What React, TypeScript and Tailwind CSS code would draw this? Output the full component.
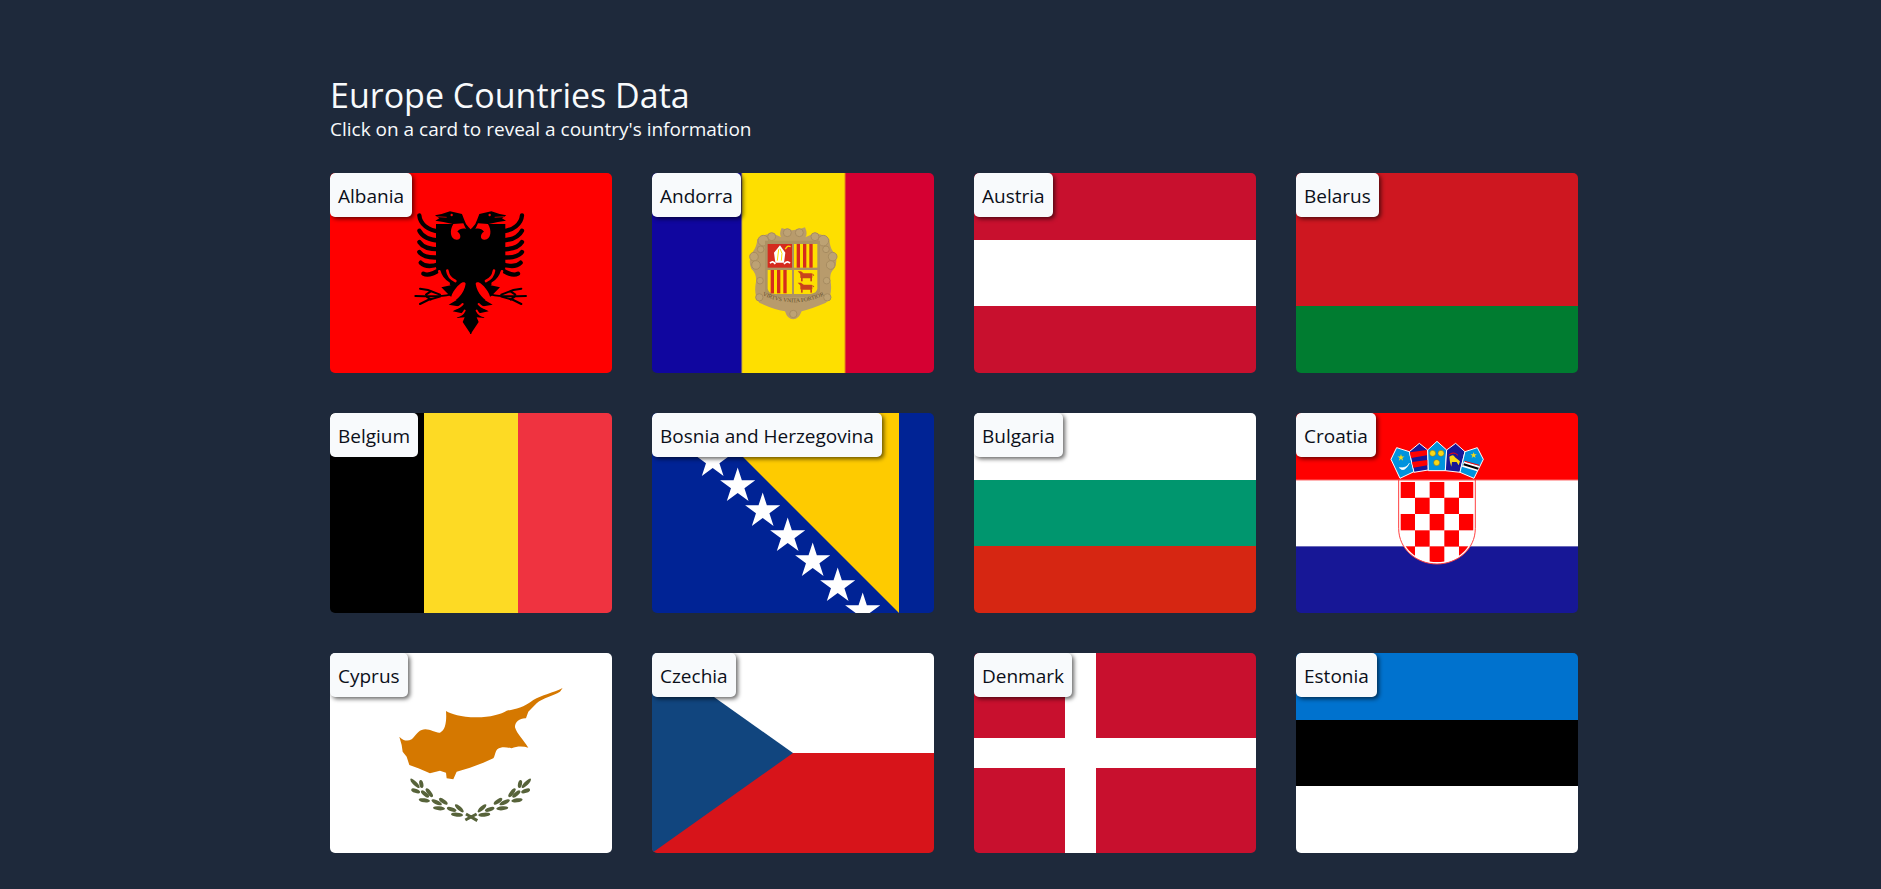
import React from "react";

const Stripes = ({ dir, bands }: { dir: "h" | "v"; bands: [string, number, number][] }) => (
  <>
    {bands.map(([c, a, b], i) =>
      dir === "h" ? (
        <rect key={i} x={0} y={a} width={282} height={b - a} fill={c} />
      ) : (
        <rect key={i} x={a} y={0} width={b - a} height={200} fill={c} />
      )
    )}
  </>
);

const EagleHalf = () => (
  <g>
    <path
      d="M214 402 L212 402 L188 366 L194 352 L170 354 L186 340 L158 334 L182 320 L146 314 L170 300 L150 288 L124 262 L152 256 L134 240 L122 222 L108 205 L108 72 L158 72 L130 66 L106 62 L118 55 L105 46 L125 42 L150 34 L186 42 L192 58 L198 72 L206 82 L214 90 Z"
      fill="#000"
    />
    <circle cx={155} cy={45} r={3.5} fill="#f00" />
    <path d="M112 50 L140 52" stroke="#f00" strokeWidth="2" />
    <g fill="none" stroke="#000" strokeWidth="13" strokeLinecap="round">
      <path d="M58 46 C60 72 85 92 118 94" />
      <path d="M58 92 C68 112 92 120 118 122" />
      <path d="M58 126 C68 142 92 148 118 148" />
      <path d="M58 156 C68 170 92 174 118 172" />
      <path d="M62 188 C74 200 96 200 118 192" />
      <path d="M70 221 C86 230 106 218 125 206" />
    </g>
    <path d="M160 72 C148 90 150 118 170 119 C186 119 183 100 172 95 C178 86 190 84 198 87 L190 70 Z" fill="#f00" />
    <path d="M197 251 C193 280 170 302 154 306 C148 296 158 270 180 252 C186 246 195 245 197 251 Z" fill="#f00" />
    <path d="M118 214 C122 230 132 242 146 250 M142 212 C144 226 150 236 166 243" fill="none" stroke="#f00" strokeWidth="8" strokeLinecap="round" />
    <path d="M150 323 C164 328 178 323 188 312 M164 348 C176 350 188 344 194 332" fill="none" stroke="#f00" strokeWidth="6" strokeLinecap="round" />
    <g fill="none" stroke="#000" strokeWidth="6" strokeLinecap="round">
      <path d="M150 284 C120 292 80 288 46 288" />
      <path d="M120 284 L84 270 L60 266" />
      <path d="M120 290 L84 300 L60 312" />
      <path d="M92 274 L78 284 M92 298 L80 290" />
    </g>
  </g>
);

const Albania = () => (
  <>
    <rect width={282} height={200} fill="#ff0000" />
    <g transform="translate(70 27) scale(0.3333)">
      <EagleHalf />
      <g transform="translate(424 0) scale(-1 1)">
        <EagleHalf />
      </g>
    </g>
  </>
);

const Cow = ({ x, y }: { x: number; y: number }) => (
  <g transform={`translate(${x} ${y})`} fill="#c9431c">
    <rect x={8} y={8} width={36} height={15} rx={3} />
    <rect x={10} y={22} width={5} height={10} />
    <rect x={38} y={22} width={5} height={10} />
    <path d="M10 12 L0 2 L10 2 L18 8 Z" />
    <path d="M44 8 L50 14 L46 16 Z" />
  </g>
);

const curls: [number, number, number][] = [
  [172, 68, 12], [208, 68, 12], [100, 92, 16], [125, 80, 12], [280, 92, 16], [255, 80, 12],
  [72, 140, 13], [308, 140, 13], [78, 165, 13], [302, 165, 13], [92, 118, 10], [288, 118, 10],
  [90, 212, 10], [290, 212, 10], [88, 262, 11], [292, 262, 11], [190, 312, 11],
];

const Andorra = () => (
  <>
    <Stripes dir="v" bands={[["#10069f", 0, 90], ["#fedf00", 90, 193], ["#d50032", 193, 282]]} />
    <rect x={89.5} width={1} height={200} fill="#c9b03a" />
    <rect x={192.5} width={1} height={200} fill="#e88a18" />
    <g transform="translate(78 37) scale(0.3333)">
      <path
        d="M155 54 Q190 68 225 52 Q234 72 226 82 Q265 60 298 88 Q300 113 308 123 Q328 150 312 176 Q297 190 302 215 Q308 258 288 278 Q240 298 215 304 Q206 328 190 328 Q172 328 165 304 Q130 298 88 278 Q70 256 78 215 Q80 190 64 176 Q52 150 70 123 Q80 110 82 88 Q116 60 154 82 Q146 72 155 54Z"
        fill="#b89b6c"
      />
      {curls.map(([x, y, r], i) => (
        <circle key={i} cx={x} cy={y} r={r} fill="#bda274" stroke="#a78c60" strokeWidth="3" />
      ))}
      <path d="M105 92 L270 92 L270 245 Q262 262 190 262 Q118 262 105 245 Z" fill="#ac9264" />
      <rect x={113} y={102} width={73} height={71} fill="#d52b1e" />
      <path d="M150 106 L166 128 L162 158 L136 158 L132 128 Z" fill="#fff" />
      <path d="M150 116 L156 130 L154 152 M146 118 L142 152" stroke="#fedf00" strokeWidth="3" fill="none" />
      <path d="M166 118 Q172 104 182 110" stroke="#fedf00" strokeWidth="4" fill="none" />
      <path d="M120 160 Q128 150 136 162 M180 160 Q172 150 162 162" stroke="#fff" strokeWidth="5" fill="none" />
      <rect x={192} y={102} width={70} height={71} fill="#fedf00" />
      {[200, 219, 238].map((x) => (
        <rect key={x} x={x} y={102} width={10} height={71} fill="#d52b1e" />
      ))}
      <path d="M113 180 L186 180 L186 252 L135 252 Q113 250 113 235 Z" fill="#fedf00" />
      {[122, 141, 160].map((x) => (
        <rect key={x} x={x} y={180} width={10} height={70} fill="#d52b1e" />
      ))}
      <path d="M192 180 L262 180 L262 235 Q262 250 240 252 L192 252 Z" fill="#fedf00" />
      <Cow x={203} y={182} />
      <Cow x={203} y={216} />
      <path id="andorra-motto" d="M98 256 Q190 298 282 256" fill="none" />
      <text fontFamily="'Liberation Serif', serif" fontSize="17" fill="#5f4c2a">
        <textPath href="#andorra-motto" startOffset="50%" textAnchor="middle">
          VIRTVS VNITA FORTIOR
        </textPath>
      </text>
    </g>
  </>
);

const starPts = (cx: number, cy: number, r: number) => {
  const pts: string[] = [];
  for (let i = 0; i < 10; i++) {
    const rad = i % 2 === 0 ? r : r * 0.382;
    const a = -Math.PI / 2 + (i * Math.PI) / 5;
    pts.push(`${cx + rad * Math.cos(a)},${cy + rad * Math.sin(a)}`);
  }
  return pts.join(" ");
};

const Bosnia = () => (
  <>
    <rect width={282} height={200} fill="#002395" />
    <polygon points="47,0 247,0 247,200" fill="#fecb00" />
    {[-1, 0, 1, 2, 3, 4, 5, 6].map((i) => (
      <polygon key={i} points={starPts(60.7 + i * 25, 48 + i * 25, 18.5)} fill="#fff" />
    ))}
  </>
);

const Croatia = () => {
  const cols = [331, 375, 419, 463, 507];
  const rows = [245, 293, 342, 391, 439];
  return (
    <>
      <Stripes dir="h" bands={[["#ff0000", 0, 67], ["#ffffff", 67, 133], ["#171796", 133, 200]]} />
      <rect y={66.5} width={282} height={1} fill="#ff6a6a" />
      <rect y={133} width={282} height={1} fill="#6a6ab8" />
      <g transform="translate(-6 -13) scale(0.3333)">
        <defs>
          <clipPath id="cro-shield">
            <path d="M331 245 H551 V385 C551 445 500 487 441 487 C382 487 331 445 331 385 Z" />
          </clipPath>
        </defs>
        <path d="M326 240 H556 V385 C556 448 502 492 441 492 C380 492 326 448 326 385 Z" fill="#fff" stroke="#ff4040" strokeWidth="3" />
        <g clipPath="url(#cro-shield)">
          {rows.map((y, r) =>
            cols.map((x, c) =>
              (r + c) % 2 === 0 ? <rect key={`${r}-${c}`} x={x} y={y} width={44} height={49} fill="#ff0000" /> : null
            )
          )}
          <rect x={419} y={488} width={44} height={4} fill="#ff0000" />
        </g>
        <g stroke="#fff" strokeWidth="3" strokeLinejoin="round">
          <polygon points="303,178 320,143 358,155 372,215 330,235" fill="#0093dd" />
          <polygon points="358,155 388,130 413,150 415,210 372,217" fill="#171796" />
          <polygon points="413,150 441,124 470,150 466,212 415,212" fill="#0093dd" />
          <polygon points="470,150 497,130 525,155 510,217 466,212" fill="#171796" />
          <polygon points="525,155 562,143 580,178 552,235 510,217" fill="#0093dd" />
        </g>
        <path d="M360 157 L411 150 V166 L363 174 Z M366 186 L412 180 V196 L370 203 Z" fill="#ff0000" />
        <polygon points={starPts(333, 173, 11)} fill="#f7d917" />
        <path d="M328 203 Q342 220 358 190 Q350 206 328 203 Z" fill="#fff" stroke="#fff" strokeWidth="2" />
        {[[428, 160], [453, 160], [440, 188]].map(([x, y]) => (
          <circle key={x + y} cx={x} cy={y} r={9} fill="#f7d917" stroke="#8a6a10" strokeWidth="1.5" />
        ))}
        <path d="M478 170 Q490 160 495 172 L510 184 L506 196 L500 186 L486 186 L484 200 L480 186 Z" fill="#f7d917" />
        <path d="M476 166 Q490 152 504 166" stroke="#ff0000" strokeWidth="3" fill="none" />
        <polygon points={starPts(551, 166, 10)} fill="#f7d917" />
        <path d="M522 184 L568 198 L562 214 L516 200 Z" fill="#fff" />
        <path d="M522 190 L566 203 L564 209 L520 196 Z" fill="#000" />
        <path d="M524 184 L568 196" stroke="#ff0000" strokeWidth="3" />
      </g>
    </>
  );
};

const leaves: [number, number, number, number][] = [
  [285, 430, 19, 45],
  [304, 432, 12, 78],
  [287, 453, 14, 20],
  [315, 462, 15, 40],
  [328, 458, 16, 52],
  [313, 481, 17, 8],
  [350, 487, 17, 25],
  [370, 484, 15, 35],
  [357, 505, 18, 5],
  [395, 508, 15, 18],
  [418, 505, 17, 42],
  [411, 524, 18, 5],
];

const Cyprus = () => (
  <>
    <rect width={282} height={200} fill="#ffffff" />
    <g transform="translate(-10 -13) scale(0.3333)">
      <path
        d="M238 290 C250 302 262 305 275 298 C285 290 290 276 305 270 C325 262 345 280 360 278 C378 270 380 240 378 213 C395 222 420 232 470 232 C510 232 545 222 560 212 C585 208 610 203 640 180 C665 165 700 158 728 144 L720 155 C700 168 670 172 650 190 L625 215 L618 235 C600 234 585 245 585 262 C590 280 610 300 625 323 C610 318 590 318 575 325 C560 322 545 318 532 328 C525 335 525 350 520 355 L490 368 L450 383 L410 395 L400 418 L380 415 L378 398 L360 392 L330 400 L295 385 L268 375 L260 350 L248 335 L245 315 Z"
        fill="#d57800"
      />
      {leaves.map(([x, y, l, r], i) => (
        <React.Fragment key={i}>
          <ellipse cx={x} cy={y} rx={l} ry={6} transform={`rotate(${r} ${x} ${y})`} fill="#57633a" />
          <ellipse cx={904 - x} cy={y} rx={l} ry={6} transform={`rotate(${-r} ${904 - x} ${y})`} fill="#57633a" />
        </React.Fragment>
      ))}
      <path d="M436 540 L470 522 M438 522 L472 542" stroke="#57633a" strokeWidth="9" />
    </g>
  </>
);

const flags: [string, React.ReactNode][] = [
  ["Albania", <Albania />],
  ["Andorra", <Andorra />],
  ["Austria", <Stripes dir="h" bands={[["#c8102e", 0, 67], ["#ffffff", 67, 133], ["#c8102e", 133, 200]]} />],
  ["Belarus", <Stripes dir="h" bands={[["#ce1720", 0, 133], ["#007c30", 133, 200]]} />],
  ["Belgium", <Stripes dir="v" bands={[["#000000", 0, 94], ["#fdda24", 94, 188], ["#ef3340", 188, 282]]} />],
  ["Bosnia and Herzegovina", <Bosnia />],
  ["Bulgaria", <Stripes dir="h" bands={[["#ffffff", 0, 67], ["#00966e", 67, 133], ["#d62612", 133, 200]]} />],
  ["Croatia", <Croatia />],
  ["Cyprus", <Cyprus />],
  [
    "Czechia",
    <>
      <Stripes dir="h" bands={[["#ffffff", 0, 100], ["#d7141a", 100, 200]]} />
      <polygon points="0,0 141,100 0,200" fill="#11457e" />
    </>,
  ],
  [
    "Denmark",
    <>
      <rect width={282} height={200} fill="#c8102e" />
      <rect x={91} width={31} height={200} fill="#fff" />
      <rect y={85} width={282} height={30} fill="#fff" />
    </>,
  ],
  ["Estonia", <Stripes dir="h" bands={[["#0072ce", 0, 67], ["#000000", 67, 133], ["#ffffff", 133, 200]]} />],
];

export default function App() {
  return (
    <div className="min-h-screen bg-[#1e293b] pt-[73px] pl-[330px] pb-9 font-['Open_Sans','Noto_Sans',sans-serif]">
      <h1 className="text-[34px] leading-[44px] text-[#f8fafc]">Europe Countries Data</h1>
      <p className="text-[19px] leading-[24px] text-[#f8fafc]">Click on a card to reveal a country's information</p>
      <div className="mt-8 grid w-[1248px] grid-cols-4 gap-10">
        {flags.map(([name, flag]) => (
          <div key={name} className="relative h-[200px] w-[282px] cursor-pointer overflow-hidden rounded-[5px]">
            <svg viewBox="0 0 282 200" width={282} height={200} className="block">
              {flag}
            </svg>
            <span className="absolute top-0 left-0 rounded-[5px] bg-[#f8fafc] px-2 pt-[9px] pb-[7px] text-[19px] leading-7 text-[#0b0f19] shadow-[2px_2px_4px_rgba(0,0,0,0.6)]">
              {name}
            </span>
          </div>
        ))}
      </div>
    </div>
  );
}
